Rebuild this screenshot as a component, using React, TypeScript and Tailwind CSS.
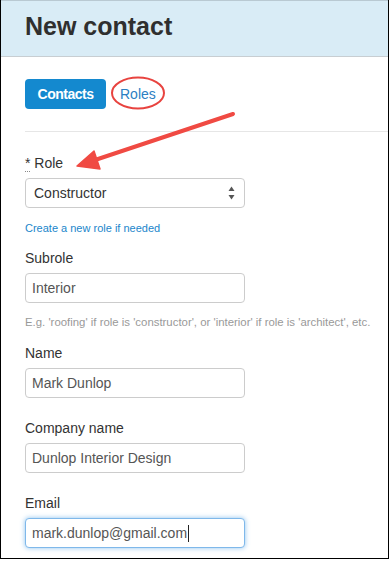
import React from "react";

function Field({
  label,
  value,
  mt,
  focused,
}: {
  label: React.ReactNode;
  value: string;
  mt: string;
  focused?: boolean;
}) {
  return (
    <div className={mt}>
      <div className="h-[20px] text-[14px] leading-[20px] text-[#333]">{label}</div>
      <div
        className={
          "mt-[5px] flex h-[30px] w-[220px] items-center rounded-[4px] border bg-white pl-[6px] text-[14px] text-[#555] " +
          (focused
            ? "border-[#7fb8ea] shadow-[0_0_5px_rgba(102,175,233,0.75)]"
            : "border-[#cccccc]")
        }
      >
        <span>{value}</span>
        {focused && <span className="ml-[1px] inline-block h-[17px] w-[1px] bg-[#222]" />}
      </div>
    </div>
  );
}

export default function App() {
  return (
    <div className="min-h-[562px] w-[391px] bg-white" style={{ fontFamily: '"Liberation Sans", Arial, sans-serif' }}>
      <div className="relative h-[559px] w-[389px] border-x border-b border-x-black border-b-black">
        {/* Header */}
        <div className="h-[57px] border-y border-t-[#b9c9d2] border-b-[#c8ced2] bg-[#d9ecf6] pl-[24px] pt-[10px]">
          <h1 className="text-[25px] font-bold leading-[30px] text-[#2f2f2f]">New contact</h1>
        </div>

        {/* Buttons */}
        <div className="mt-[22px] flex items-center pl-[24px]">
          <div className="flex h-[30px] w-[81px] items-center justify-center rounded-[4px] bg-[#1489cf] text-[14px] font-bold tracking-[-0.5px] text-white">
            Contacts
          </div>
          <div className="ml-[14px] text-[14px] text-[#2c7fc3]">Roles</div>
        </div>

        <div className="ml-[24px] mt-[22px] h-px bg-[#e6e6e6]" />

        {/* Form */}
        <div className="pl-[24px]">
          <div className="mt-[21px]">
            <div className="h-[20px] text-[14px] leading-[20px] text-[#333]">
              <span className="border-b border-dotted border-[#888] leading-[14px]">*</span> Role
            </div>
            <div className="relative mt-[5px] flex h-[30px] w-[220px] items-center rounded-[4px] border border-[#cccccc] bg-white pl-[8px] text-[14px] text-[#333]">
              Constructor
              <svg className="absolute right-[9px] top-[7px]" width="7" height="14" viewBox="0 0 7 14">
                <path d="M3.5 0.5 L6.5 5 L0.5 5 Z" fill="#555" />
                <path d="M3.5 13.5 L6.5 9 L0.5 9 Z" fill="#555" />
              </svg>
            </div>
          </div>
          <div className="mt-[12px] h-[16px] text-[11px] leading-[16px] text-[#1b86cb]">Create a new role if needed</div>

          <Field mt="mt-[12px]" label="Subrole" value="Interior" />
          <div className="mt-[11px] h-[16px] whitespace-nowrap text-[11.4px] leading-[16px] text-[#999]">
            E.g. 'roofing' if role is 'constructor', or 'interior' if role is 'architect', etc.
          </div>

          <Field mt="mt-[13px]" label="Name" value="Mark Dunlop" />
          <Field mt="mt-[20px]" label="Company name" value="Dunlop Interior Design" />
          <Field mt="mt-[20px]" label="Email" value="mark.dunlop@gmail.com" focused />
        </div>

        {/* Annotations */}
        <svg className="pointer-events-none absolute left-0 top-0" width="389" height="559" viewBox="0 0 389 559">
          <ellipse cx="137" cy="93" rx="26" ry="15.5" fill="none" stroke="#e8433f" strokeWidth="2" />
          <line x1="232" y1="114" x2="94" y2="160" stroke="#f04a43" strokeWidth="4" strokeLinecap="round" />
          <path d="M76 166 L93 151 L99 169 Z" fill="#f04a43" stroke="#f04a43" strokeWidth="1.5" strokeLinejoin="round" />
        </svg>
      </div>
    </div>
  );
}
